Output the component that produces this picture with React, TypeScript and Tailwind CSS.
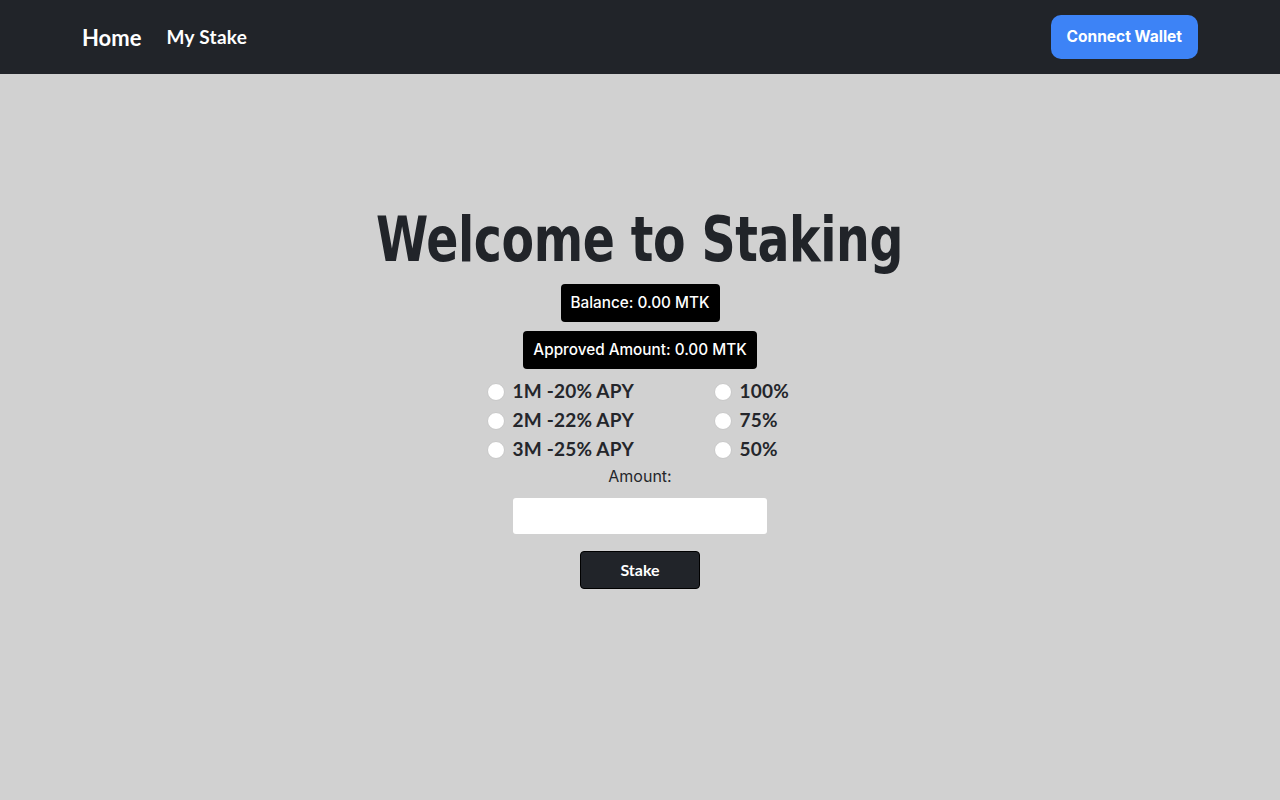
import { useState } from "react";

const terms = ["1M -20% APY", "2M -22% APY", "3M -25% APY"];
const shares = ["100%", "75%", "50%"];

function Radio({ label, name, checked, onChange }: { label: string; name: string; checked: boolean; onChange: () => void }) {
  return (
    <label className="flex items-center gap-[8px] h-[29px] cursor-pointer whitespace-nowrap">
      <input type="radio" name={name} checked={checked} onChange={onChange} className="hidden" />
      <span className="w-[18px] h-[18px] rounded-full bg-white border border-[#c8c8c8] shrink-0" />
      <span className="text-[19px] font-bold text-[#24262b] tracking-[0.2px]">{label}</span>
    </label>
  );
}

export default function App() {
  const [term, setTerm] = useState(-1);
  const [share, setShare] = useState(-1);
  const [amount, setAmount] = useState("");

  return (
    <div className="min-h-screen bg-[#d1d1d1] font-['Lato',sans-serif]">
      <nav className="h-[74px] bg-[#212429] flex items-center justify-between px-[82px]">
        <div className="flex items-center gap-[25px] text-white">
          <a className="text-[22px] font-bold">Home</a>
          <a className="text-[19px] font-bold tracking-[0.3px]">My Stake</a>
        </div>
        <button className="h-[44px] px-[16px] rounded-[10px] bg-[#3d83f6] text-white text-[15.5px] font-bold font-['Inter',sans-serif]">
          Connect Wallet
        </button>
      </nav>

      <main className="flex flex-col items-center pt-[128px]">
        <h1 className="text-[62px] leading-[76px] font-bold text-[#212429] font-['DejaVu_Sans',sans-serif] tracking-[-0.5px] whitespace-nowrap scale-x-[0.765]">
          Welcome to Staking
        </h1>
        <div className="mt-[6px] h-[38px] px-[10px] flex items-center rounded-[4px] bg-black text-white text-[15.3px] font-medium font-['Inter',sans-serif]">
          Balance: 0.00 MTK
        </div>
        <div className="mt-[9px] h-[38px] px-[10px] flex items-center rounded-[4px] bg-black text-white text-[15.3px] font-medium font-['Inter',sans-serif]">
          Approved Amount: 0.00 MTK
        </div>

        <div className="mt-[8px] grid grid-cols-[227px_80px]">
          <div className="flex flex-col">
            {terms.map((t, i) => (
              <Radio key={t} label={t} name="term" checked={term === i} onChange={() => setTerm(i)} />
            ))}
          </div>
          <div className="flex flex-col">
            {shares.map((s, i) => (
              <Radio key={s} label={s} name="share" checked={share === i} onChange={() => setShare(i)} />
            ))}
          </div>
        </div>

        <label className="text-[16px] text-[#24262b] font-['Inter',sans-serif]">Amount:</label>
        <input
          value={amount}
          onChange={(e) => setAmount(e.target.value)}
          className="mt-[10px] w-[254px] h-[36px] bg-white rounded-[3px] outline-none px-2"
        />
        <button className="mt-[17px] w-[120px] h-[38px] rounded-[4px] bg-[#212429] border border-black text-white text-[16px] font-bold">
          Stake
        </button>
      </main>
    </div>
  );
}
